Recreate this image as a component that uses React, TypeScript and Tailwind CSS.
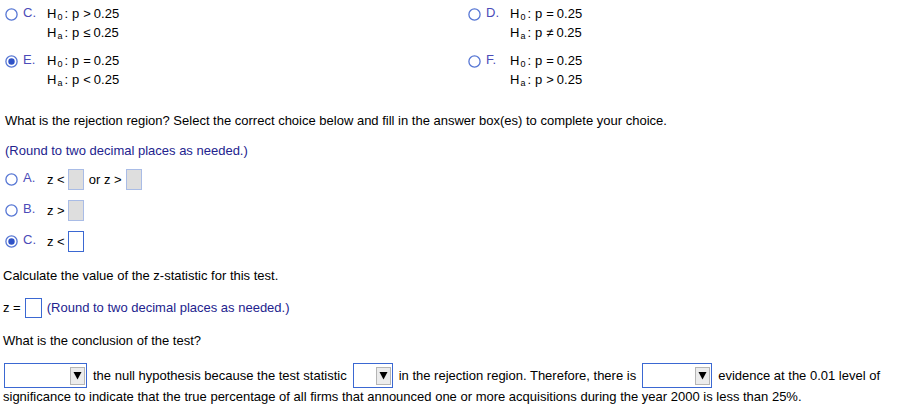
import React from "react";

function Radio({ checked }: { checked?: boolean }) {
  return (
    <svg width="13" height="13" viewBox="0 0 13 13" className="shrink-0">
      <circle cx="6.5" cy="6.5" r="5.6" fill="#fff" stroke="#5676d4" strokeWidth="1.3" />
      {checked && <circle cx="6.5" cy="6.5" r="3.2" fill="#2f52c6" />}
    </svg>
  );
}

function Box({ active, w = 16, h = 21 }: { active?: boolean; w?: number; h?: number }) {
  return (
    <span
      className={
        active
          ? "inline-block bg-white border-[1.5px] border-[#3b68d2]"
          : "inline-block bg-[#dedede] border border-[#a9bce6]"
      }
      style={{ width: w, height: h }}
    />
  );
}

function Drop({ w }: { w: number }) {
  return (
    <span
      className="inline-flex items-center justify-end h-[25px] bg-white border-[1.5px] border-[#3b68d2] pr-[1px] shrink-0"
      style={{ width: w }}
    >
      <span className="flex items-center justify-center w-[15px] h-[18px] bg-[#ececec] border border-[#b5b5b5]">
        <svg width="9" height="9" viewBox="0 0 9 9">
          <polygon points="0.5,1 8.5,1 4.5,8.5" fill="#000" />
        </svg>
      </span>
    </span>
  );
}

function Hyp({ sub, rel }: { sub: string; rel: string }) {
  return (
    <div className="h-[19px] flex items-center">
      <span>H</span>
      <span className="text-[9px] relative top-[4px] ml-[1px]">{sub}</span>
      <span className="ml-[2px]">:</span>
      <span className="ml-[4px]">p</span>
      <span className="ml-[4px]">{rel}</span>
      <span className="ml-[3px]">0.25</span>
    </div>
  );
}

function HypOpt({ letter, checked, r0, ra }: { letter: string; checked?: boolean; r0: string; ra: string }) {
  return (
    <div className="flex">
      <div className="h-[19px] flex items-center">
        <Radio checked={checked} />
        <span className="ml-[5px] w-[24px] text-[#4b4bb8] relative top-[-1px]">{letter}.</span>
      </div>
      <div className="flex flex-col">
        <Hyp sub="0" rel={r0} />
        <Hyp sub="a" rel={ra} />
      </div>
    </div>
  );
}

function RegOpt({ letter, checked, children, top }: { letter: string; checked?: boolean; children: React.ReactNode; top: string }) {
  return (
    <div className={"flex items-center h-[22px] " + top}>
      <Radio checked={checked} />
      <span className="ml-[5px] w-[24px] text-[#4b4bb8] relative top-[-2px]">{letter}.</span>
      {children}
    </div>
  );
}

export default function App() {
  return (
    <div
      className="w-[920px] h-[416px] bg-white text-[13px] text-[#000] px-[5px] pt-[4.5px] overflow-hidden"
      style={{ fontFamily: '"Liberation Sans", Arial, sans-serif' }}
    >
      <div className="grid grid-cols-[463px_1fr] gap-y-[9px]">
        <HypOpt letter="C" r0=">" ra="≤" />
        <HypOpt letter="D" r0="=" ra="≠" />
        <HypOpt letter="E" checked r0="=" ra="<" />
        <HypOpt letter="F" r0="=" ra=">" />
      </div>

      <div className="h-[20px] flex items-center mt-[21px]">
        What is the rejection region? Select the correct choice below and fill in the answer box(es) to complete your choice.
      </div>
      <div className="h-[20px] flex items-center mt-[10px] text-[#23238e]">
        (Round to two decimal places as needed.)
      </div>

      <RegOpt letter="A" top="mt-[8px]">
        <span className="mr-[3px]">z &lt;</span>
        <Box />
        <span className="ml-[5px] mr-[4px]">or z &gt;</span>
        <Box />
      </RegOpt>
      <RegOpt letter="B" top="mt-[9px]">
        <span className="mr-[3px]">z &gt;</span>
        <Box />
      </RegOpt>
      <RegOpt letter="C" checked top="mt-[9px]">
        <span className="mr-[3px]">z &lt;</span>
        <Box active />
      </RegOpt>

      <div className="h-[20px] flex items-center mt-[13px] -ml-[2px]">
        Calculate the value of the z-statistic for this test.
      </div>
      <div className="h-[20px] flex items-center mt-[12px] -ml-[2px]">
        <span className="mr-[4px]">z =</span>
        <Box active w={17} h={20} />
        <span className="ml-[5px] text-[#23238e]">(Round to two decimal places as needed.)</span>
      </div>
      <div className="h-[20px] flex items-center mt-[13px] -ml-[2px]">
        What is the conclusion of the test?
      </div>
      <div className="h-[26px] flex items-center mt-[12px] -ml-[1px] whitespace-nowrap">
        <Drop w={83} />
        <span className="ml-[6px]">the null hypothesis because the test statistic</span>
        <span className="ml-[6px]"><Drop w={40} /></span>
        <span className="ml-[6px]">in the rejection region. Therefore, there is</span>
        <span className="ml-[6px]"><Drop w={70} /></span>
        <span className="ml-[6px]">evidence at the 0.01 level of</span>
      </div>
      <div className="h-[16px] flex items-center -ml-[2px] whitespace-nowrap">
        significance to indicate that the true percentage of all firms that announced one or more acquisitions during the year 2000 is less than 25%.
      </div>
    </div>
  );
}
